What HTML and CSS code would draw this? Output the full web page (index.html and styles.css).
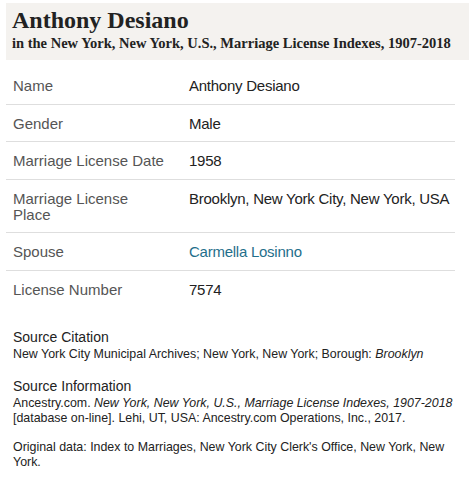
FILE: index.html
```html
<!DOCTYPE html>
<html lang="en">
<head>
    <meta charset="UTF-8">
    <meta name="viewport" content="width=device-width, initial-scale=1.0">
    <title>Anthony Desiano - Marriage License Index</title>
    <link rel="stylesheet" href="styles.css">
</head>
<body>
    <div class="record">
        <div class="record-header">
            <h1>Anthony Desiano</h1>
            <p>in the New York, New York, U.S., Marriage License Indexes, 1907-2018</p>
        </div>

        <table class="facts">
            <colgroup>
                <col class="label-col">
                <col>
            </colgroup>
            <tr>
                <th>Name</th>
                <td>Anthony Desiano</td>
            </tr>
            <tr>
                <th>Gender</th>
                <td>Male</td>
            </tr>
            <tr>
                <th>Marriage License Date</th>
                <td>1958</td>
            </tr>
            <tr>
                <th>Marriage License Place</th>
                <td>Brooklyn, New York City, New York, USA</td>
            </tr>
            <tr>
                <th>Spouse</th>
                <td><a href="#">Carmella Losinno</a></td>
            </tr>
            <tr>
                <th>License Number</th>
                <td>7574</td>
            </tr>
        </table>

        <div class="source">
            <h2>Source Citation</h2>
            <p>New York City Municipal Archives; New York, New York; Borough: <em>Brooklyn</em></p>
        </div>

        <div class="source">
            <h2>Source Information</h2>
            <p>Ancestry.com. <em>New York, New York, U.S., Marriage License Indexes, <span class="nowrap">1907-2018</span></em> [database on-line]. Lehi, UT, USA: Ancestry.com Operations, Inc., 2017.</p>
            <p>Original data: Index to Marriages, New York City Clerk's Office, New York, New York.</p>
        </div>
    </div>
</body>
</html>
```

FILE: styles.css
```css
* {
    margin: 0;
    padding: 0;
    box-sizing: border-box;
}

body {
    font-family: 'Liberation Sans', Arial, sans-serif;
    color: #222;
    background: #fff;
}

.record {
    padding: 3px 0 0 6px;
}

.record-header {
    background: #f4f2ef;
    padding: 4px 6px 8px;
    font-family: 'Liberation Serif', 'Times New Roman', serif;
    color: #222;
}

.record-header h1 {
    font-size: 24px;
    line-height: 27px;
    font-weight: 700;
}

.record-header p {
    font-size: 14.5px;
    line-height: 18px;
    font-weight: 700;
    white-space: nowrap;
}

.facts {
    width: 449px;
    table-layout: fixed;
    border-collapse: collapse;
    margin-top: 7px;
    font-size: 15px;
    line-height: 16px;
}

.facts .label-col {
    width: 183px;
}

.facts tr {
    border-bottom: 1px solid #dedede;
}

.facts tr:last-child {
    border-bottom: none;
}

.facts th {
    text-align: left;
    font-weight: 400;
    color: #555;
    padding: 11px 22px 9.5px 7px;
    vertical-align: top;
}

.facts td {
    color: #222;
    padding: 11px 0 9.5px;
    vertical-align: top;
    letter-spacing: -0.25px;
}

.facts a {
    color: #1f6f8b;
    text-decoration: none;
}

.source {
    padding-left: 7px;
    width: 455px;
    margin-top: 20px;
}

.source + .source {
    margin-top: 4px;
}

.source h2 {
    font-size: 14px;
    font-weight: 400;
    line-height: 20px;
    color: #222;
}

.source p {
    font-size: 12.4px;
    line-height: 15px;
    color: #222;
    margin-bottom: 14px;
}

.nowrap {
    white-space: nowrap;
}
```
